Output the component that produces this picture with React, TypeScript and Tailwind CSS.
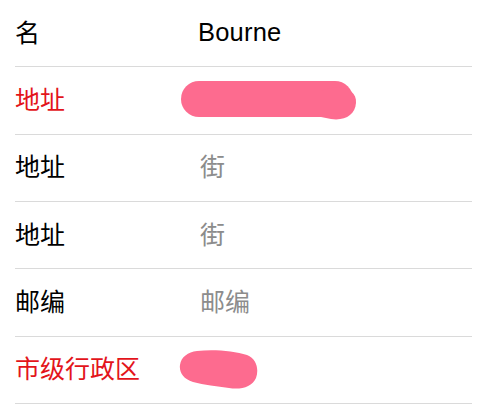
const font = "font-['Liberation_Sans','Noto_Sans_CJK_SC',sans-serif]";

type Row = {
  label: string;
  required?: boolean;
  value?: string;
  placeholder?: string;
  blot?: "long" | "short";
};

const rows: Row[] = [
  { label: "名", value: "Bourne" },
  { label: "地址", required: true, blot: "long" },
  { label: "地址", placeholder: "街" },
  { label: "地址", placeholder: "街" },
  { label: "邮编", placeholder: "邮编" },
  { label: "市级行政区", required: true, blot: "short" },
];

function LongBlot() {
  return (
    <svg width="176" height="40" viewBox="0 0 176 40" className="block">
      <line x1="18" y1="18" x2="154" y2="18" stroke="#fd6b8f" strokeWidth="36" strokeLinecap="round" />
      <path d="M 140 10 C 160 2 176 8 175 22 C 174 34 164 40 150 38 L 140 36 Z" fill="#fd6b8f" />
    </svg>
  );
}

function ShortBlot() {
  return (
    <svg width="79" height="41" viewBox="0 -1 79 41" className="block">
      <path
        d="M 18 1 C 35 -1 55 1 68 5 C 78 9 80 20 77 28 C 73 37 62 40 50 38 C 38 36 25 35 14 32 C 4 29 0 22 1 15 C 2 7 9 2 18 1 Z"
        fill="#fd6b8f"
      />
    </svg>
  );
}

export default function App() {
  return (
    <div className={`w-[483px] h-[405px] bg-white overflow-hidden ${font}`}>
      {rows.map((r, i) => (
        <div
          key={i}
          className="ml-[15px] mr-[11px] h-[67.35px] flex items-center border-b border-[#dadada]"
        >
          <div
            className={`w-[166px] shrink-0 text-[25px] leading-none ${
              r.required ? "text-[#e3141b]" : "text-black"
            }`}
          >
            {r.label}
          </div>
          <div className="flex-1 text-[25px] leading-none">
            {r.blot === "long" ? (
              <LongBlot />
            ) : r.blot === "short" ? (
              <div className="-ml-[2px]">
                <ShortBlot />
              </div>
            ) : r.value ? (
              <span className="pl-[17px] text-[25.5px] tracking-[0.2px] text-black">{r.value}</span>
            ) : (
              <span className="pl-[19px] text-[#8c8c8c]">{r.placeholder}</span>
            )}
          </div>
        </div>
      ))}
    </div>
  );
}
